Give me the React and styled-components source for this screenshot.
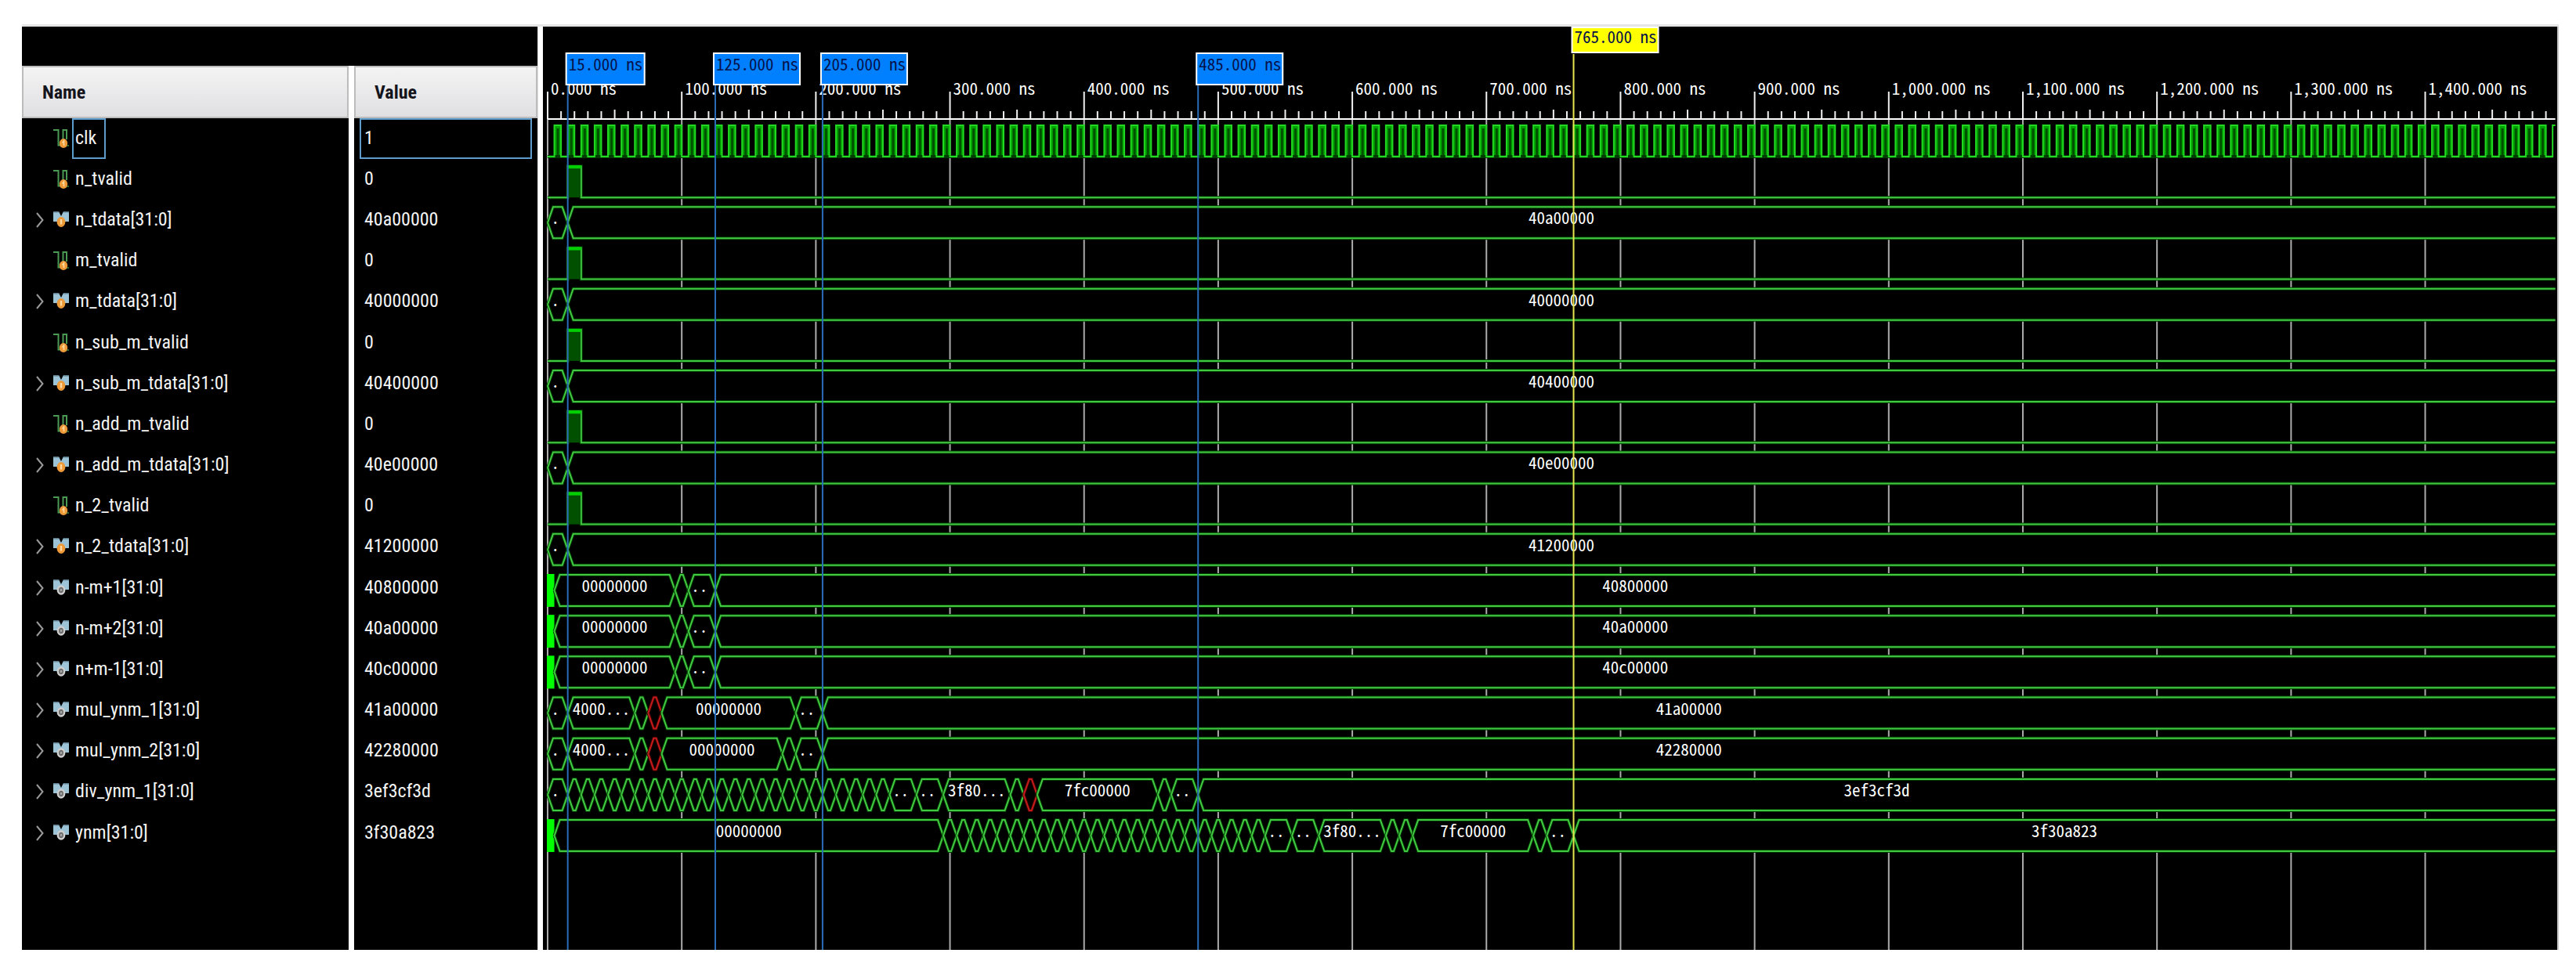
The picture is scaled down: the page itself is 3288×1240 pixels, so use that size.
import React, { useState } from 'react';
import styled, { createGlobalStyle } from 'styled-components';

const END = 1497;
const PX_PER_NS = 1.7118;
const RULER_Y = 118;
const ROW_STEP = 52.18;
const FIRST_BASE = 166;
const WAVE_HEIGHT = 40;
const SLOPE = 7;

const x = ns => 6 + ns * PX_PER_NS;

// every bus segment is [end, label, kind], it starts where the previous one ended
const steps = (from, to) => {
  const list = [];
  for (let t = from + 10; t <= to; t += 10) list.push([t, '']);
  return list;
};

const operand = value => [
  [15, '.'],
  [END, value],
];

const sum = value => [
  [5, '', 'unknown'],
  [95, '00000000'],
  [105, ''],
  [125, '..'],
  [END, value],
];

const signals = [
  { name: 'clk', value: '1', type: 'clock' },
  { name: 'n_tvalid', value: '0', type: 'pulse' },
  { name: 'n_tdata[31:0]', value: '40a00000', type: 'bus', segments: operand('40a00000') },
  { name: 'm_tvalid', value: '0', type: 'pulse' },
  { name: 'm_tdata[31:0]', value: '40000000', type: 'bus', segments: operand('40000000') },
  { name: 'n_sub_m_tvalid', value: '0', type: 'pulse' },
  { name: 'n_sub_m_tdata[31:0]', value: '40400000', type: 'bus', segments: operand('40400000') },
  { name: 'n_add_m_tvalid', value: '0', type: 'pulse' },
  { name: 'n_add_m_tdata[31:0]', value: '40e00000', type: 'bus', segments: operand('40e00000') },
  { name: 'n_2_tvalid', value: '0', type: 'pulse' },
  { name: 'n_2_tdata[31:0]', value: '41200000', type: 'bus', segments: operand('41200000') },
  { name: 'n-m+1[31:0]', value: '40800000', type: 'bus', internal: true, segments: sum('40800000') },
  { name: 'n-m+2[31:0]', value: '40a00000', type: 'bus', internal: true, segments: sum('40a00000') },
  { name: 'n+m-1[31:0]', value: '40c00000', type: 'bus', internal: true, segments: sum('40c00000') },
  {
    name: 'mul_ynm_1[31:0]',
    value: '41a00000',
    type: 'bus',
    internal: true,
    segments: [
      [15, '.'],
      [65, '4000...'],
      [75, ''],
      [85, '', 'error'],
      [185, '00000000'],
      [205, '..'],
      [END, '41a00000'],
    ],
  },
  {
    name: 'mul_ynm_2[31:0]',
    value: '42280000',
    type: 'bus',
    internal: true,
    segments: [
      [15, '.'],
      [65, '4000...'],
      [75, ''],
      [85, '', 'error'],
      [175, '00000000'],
      [185, ''],
      [205, '..'],
      [END, '42280000'],
    ],
  },
  {
    name: 'div_ynm_1[31:0]',
    value: '3ef3cf3d',
    type: 'bus',
    internal: true,
    segments: [
      [15, '.'],
      ...steps(15, 255),
      [275, '..'],
      [295, '..'],
      [345, '3f80...'],
      [355, ''],
      [365, '', 'error'],
      [455, '7fc00000'],
      [465, ''],
      [485, '..'],
      [END, '3ef3cf3d'],
    ],
  },
  {
    name: 'ynm[31:0]',
    value: '3f30a823',
    type: 'bus',
    internal: true,
    segments: [
      [5, '', 'unknown'],
      [295, '00000000'],
      ...steps(295, 535),
      [555, '..'],
      [575, '..'],
      [625, '3f80...'],
      [635, ''],
      [645, ''],
      [735, '7fc00000'],
      [745, ''],
      [765, '..'],
      [END, '3f30a823'],
    ],
  },
];

const markers = [15, 125, 205, 485];
const cursor = 765;

const formatTime = ns => `${ns.toLocaleString('en-US')}.000 ns`;

function SignalIcon({ type, internal }) {
  if (type !== 'bus') {
    return (
      <Icon viewBox="0 0 20 26" aria-hidden="true">
        <path d="M0 2H6.5V21.5H12.5V2H17V14" fill="none" stroke="#4a9a54" strokeWidth="2" />
        <path d="M16 22H20" stroke="#2c6434" strokeWidth="2" />
        <ellipse cx="13" cy="19" rx="5.2" ry="6" fill="#ee9a38" />
        <path d="M11.5 18.5l2-2.5v6" fill="none" stroke="#ffd9a0" strokeWidth="1.6" />
      </Icon>
    );
  }
  return (
    <Icon viewBox="0 0 20 26" aria-hidden="true">
      <path d="M0 2H7L10 8L13 2H20V15H15L10 11L5 15H0Z" fill="#9cc3d6" />
      <path d="M0 2.8H7M13 2.8H20" stroke="#5f7f8f" strokeWidth="1.6" />
      {internal ? (
        <>
          <ellipse cx="10" cy="15.5" rx="4.2" ry="5" fill="#6c6c6c" stroke="#cfcfcf" strokeWidth="2.4" />
          <ellipse cx="10" cy="15.5" rx="1.4" ry="1.8" fill="#a8a8a8" />
        </>
      ) : (
        <>
          <ellipse cx="10" cy="15.5" rx="5.4" ry="6.4" fill="#ee9a38" />
          <path d="M10 12v6.5" stroke="#ffd9a0" strokeWidth="2.4" />
        </>
      )}
    </Icon>
  );
}

function SignalTable({ selected, onSelect }) {
  return (
    <Table>
      <thead>
        <tr>
          <HeadCell scope="col">Name</HeadCell>
          <HeadCell scope="col" $narrow>
            Value
          </HeadCell>
        </tr>
      </thead>
      <tbody>
        {signals.map(({ name, value, type, internal }) => (
          <Row key={name} onClick={() => onSelect(name)}>
            <Cell>
              <NameGroup>
                {type === 'bus' ? (
                  <Expander type="button" aria-label={`Expand ${name}`}>
                    <svg width="10" height="20" viewBox="0 0 10 20">
                      <path d="M1 1L8.5 10L1 19" fill="none" stroke="#9a9a9a" strokeWidth="2" />
                    </svg>
                  </Expander>
                ) : (
                  <ExpanderSpace />
                )}
                <SignalIcon type={type} internal={internal} />
                <Name $selected={selected === name}>{name}</Name>
              </NameGroup>
            </Cell>
            <Cell>
              <Value $selected={selected === name}>{value}</Value>
            </Cell>
          </Row>
        ))}
        <tr>
          <Cell />
          <Cell />
        </tr>
      </tbody>
    </Table>
  );
}

function Trace({ d, color = '#43c843', halo = '#003c00' }) {
  return (
    <>
      <path d={d} fill="none" stroke={halo} strokeWidth="4" />
      <path d={d} fill="none" stroke={color} strokeWidth="2" />
    </>
  );
}

function ClockWave({ base }) {
  const top = base - WAVE_HEIGHT;
  let d = `M${x(0)} ${base}`;
  const pulses = [];
  for (let t = 5; t < END; t += 10) {
    d += `H${x(t)}V${top}H${x(Math.min(t + 5, END))}`;
    if (t + 5 < END) {
      d += `V${base}`;
      pulses.push(t);
    }
  }
  return (
    <g>
      {pulses.map(t => (
        <g key={t}>
          <rect x={x(t)} y={top} width={5 * PX_PER_NS} height={WAVE_HEIGHT} fill="#00a000" />
          <rect x={x(t) + 3} y={top + 4} width="3" height={WAVE_HEIGHT - 4} fill="#005000" />
        </g>
      ))}
      <path d={`M${x(0)} ${base}H${x(1495)}`} stroke="#003c00" strokeWidth="4" />
      <path d={d} fill="none" stroke="#22d822" strokeWidth="2" />
    </g>
  );
}

function PulseWave({ base }) {
  const top = base - WAVE_HEIGHT;
  return (
    <g>
      <Trace d={`M${x(0)} ${base}H${x(15)}V${top}H${x(25)}V${base}H${x(END)}`} />
      <rect x={x(15)} y={top} width={10 * PX_PER_NS - 1} height={WAVE_HEIGHT} fill="#005000" />
      <rect x={x(15)} y={top - 1} width={10 * PX_PER_NS} height="4" fill="#00d000" />
    </g>
  );
}

function BusWave({ base, segments }) {
  const top = base - WAVE_HEIGHT;
  const mid = base - WAVE_HEIGHT / 2;
  return (
    <g>
      {segments.map(([end, label, kind], i) => {
        const start = i ? segments[i - 1][0] : 0;
        const l = x(start);
        const r = x(end);
        if (kind === 'unknown') {
          return <rect key={end} x={l - 1} y={top - 1} width={r - l + 1} height={WAVE_HEIGHT + 2} fill="#00ff00" />;
        }
        const close = end === END ? `H${r}` : `H${r - SLOPE}L${r} ${mid}`;
        const open = end === END ? `M${r} ${base}` : `M${r} ${mid}L${r - SLOPE} ${base}`;
        const upper = `M${l} ${mid}L${l + SLOPE} ${top}${close}`;
        const lower = `${open}H${l + SLOPE}L${l} ${mid}`;
        const dots = /^\.+$/.test(label);
        return (
          <g key={end}>
            <path d={`${upper}V${mid}${lower.replace('M', 'L')}Z`} fill="#000" />
            {kind === 'error' ? (
              <Trace d={upper + lower} color="#c41c1c" halo="#3c0000" />
            ) : (
              <Trace d={upper + lower} />
            )}
            {label && (
              <WaveText x={(l + r) / 2 - (dots ? 3 : 0)} y={top + 22} textAnchor="middle">
                {label}
              </WaveText>
            )}
          </g>
        );
      })}
    </g>
  );
}

function Ruler() {
  const ticks = [];
  for (let t = 0; t < END; t += 10) ticks.push(t);
  return (
    <g>
      {ticks.map(t => {
        const major = t % 100 === 0;
        const height = major ? 35 : t % 50 === 0 ? 12 : 10;
        return (
          <g key={t}>
            {major && <line x1={x(t)} x2={x(t)} y1={RULER_Y} y2="100%" stroke="#ababab" strokeWidth="2" />}
            <line x1={x(t)} x2={x(t)} y1={RULER_Y - height} y2={RULER_Y} stroke="#f0f0f0" strokeWidth="2" />
            {major && (
              <WaveText x={x(t) + 4} y="87">
                {formatTime(t)}
              </WaveText>
            )}
          </g>
        );
      })}
      <line x1={x(0)} x2={x(END)} y1={RULER_Y} y2={RULER_Y} stroke="#fff" strokeWidth="2" />
    </g>
  );
}

function Flag({ ns, active }) {
  const label = formatTime(ns);
  const left = x(ns) - 2;
  const top = active ? 1 : 34;
  return (
    <g>
      <line
        x1={x(ns)}
        x2={x(ns)}
        y1={top + 34}
        y2="100%"
        stroke={active ? '#e6e650' : '#2a6cb8'}
        strokeWidth="2"
      />
      <rect
        x={left}
        y={top}
        width={label.length * 10 + 10}
        height={active ? 32 : 40}
        fill={active ? '#ffff00' : '#0080ff'}
        stroke="#fff"
        strokeWidth="2"
      />
      <WaveText x={left + 3} y={active ? 21 : 56} $dark>
        {label}
      </WaveText>
    </g>
  );
}

function Waveform() {
  return (
    <Canvas role="img" aria-label="Waveforms">
      <Ruler />
      {signals.map(({ name, type, segments }, i) => {
        const base = FIRST_BASE + i * ROW_STEP;
        if (type === 'clock') return <ClockWave key={name} base={base} />;
        if (type === 'pulse') return <PulseWave key={name} base={base} />;
        return <BusWave key={name} base={base} segments={segments} />;
      })}
      {markers.map(ns => (
        <Flag key={ns} ns={ns} />
      ))}
      <Flag ns={cursor} active />
    </Canvas>
  );
}

export default function App() {
  const [selected, setSelected] = useState('clk');
  return (
    <Page>
      <GlobalStyle />
      <Viewer>
        <Sidebar>
          <SignalTable selected={selected} onSelect={setSelected} />
        </Sidebar>
        <WavePanel>
          <Waveform />
        </WavePanel>
      </Viewer>
    </Page>
  );
}

const GlobalStyle = createGlobalStyle`
  * {
    box-sizing: border-box;
  }
  body {
    margin: 0;
    background-color: #fff;
  }
`;

const Page = styled.main`
  display: flex;
  min-height: 100vh;
  padding: 31px 22px 27px 28px;
  font-family: 'Roboto Condensed', 'Liberation Sans', sans-serif;
  font-size: 24px;
`;

const Viewer = styled.div`
  flex: 1;
  min-width: 0;
  display: flex;
  gap: 6px;
  border-top: 3px solid #e5e5e5;
`;

const Sidebar = styled.section`
  flex: none;
  display: flex;
  width: 659px;
  padding-top: 50px;
  background-color: #000;
  border-right: 1px solid #dcdcdc;
`;

const Table = styled.table`
  width: 100%;
  table-layout: fixed;
  border-collapse: separate;
  border-spacing: 0;
  color: #f4f4f4;
  th + th,
  td + td {
    border-left: 7px solid #fff;
  }
`;

const HeadCell = styled.th`
  width: ${p => (p.$narrow ? '241px' : 'auto')};
  height: 67px;
  padding: 0 26px;
  text-align: left;
  font-weight: 700;
  color: #14141c;
  background: linear-gradient(#f4f4f4, #dfdfe2) padding-box;
  box-shadow: inset 0 0 0 2px #bcbcbc;
`;

const Row = styled.tr`
  height: 52px;
  /* keeps the rows in step with the 52.18 pitch of the traces */
  &:nth-child(6n) {
    height: 53px;
  }
`;

const Cell = styled.td`
  padding: 0;
  background-color: #000;
`;

const NameGroup = styled.div`
  display: flex;
  align-items: center;
  padding-left: 18px;
`;

const Expander = styled.button`
  display: flex;
  width: 22px;
  padding: 0;
  background: none;
  border: none;
  cursor: pointer;
`;

const ExpanderSpace = styled.span`
  width: 22px;
`;

const Icon = styled.svg`
  width: 20px;
  height: 26px;
  margin-right: 4px;
`;

const Name = styled.span`
  height: 52px;
  padding: 0 ${p => (p.$selected ? '10px' : '2px')} 0 2px;
  line-height: 46px;
  border: 2px solid ${p => (p.$selected ? '#5c9ccc' : 'transparent')};
`;

const Value = styled.div`
  height: 52px;
  margin: 0 7px;
  padding: 0 4px;
  line-height: 46px;
  border: 2px solid ${p => (p.$selected ? '#5c9ccc' : 'transparent')};
`;

const WavePanel = styled.section`
  flex: 1;
  min-width: 0;
  display: flex;
  padding-right: 3px;
  background-color: #000;
  border-right: 2px solid #c8c8c8;
`;

const Canvas = styled.svg`
  flex: 1;
  min-width: 0;
  display: block;
  overflow: visible;
`;

const WaveText = styled.text`
  font-family: 'Noto Sans Mono CJK SC', 'Liberation Mono', monospace;
  font-size: 21px;
  white-space: pre;
  fill: ${p => (p.$dark ? '#06124a' : '#fff')};
`;
